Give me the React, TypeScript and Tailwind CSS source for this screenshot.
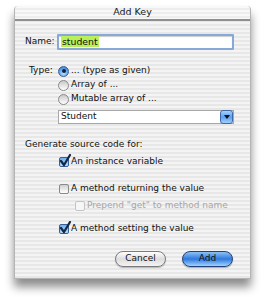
import React from 'react';

const font = "font-['DejaVu_Sans',sans-serif]";
const stripes =
  'bg-[repeating-linear-gradient(180deg,#f4f4f4_0px,#f4f4f4_2px,#e7e7e7_2px,#e7e7e7_4px)]';

function Radio({ on }: { on?: boolean }) {
  if (on) {
    return (
      <span className="relative flex h-[11px] w-[11px] items-center justify-center rounded-full border border-[#3a5f98] bg-[radial-gradient(circle_at_50%_70%,#bfe3ff_0%,#5ea2ea_55%,#2f6cc6_100%)]">
        <span className="h-[4px] w-[4px] rounded-full bg-[#10203a]" />
      </span>
    );
  }
  return (
    <span className="h-[11px] w-[11px] rounded-full border border-[#8a8a8a] bg-[linear-gradient(180deg,#c8c8c8,#ffffff)]" />
  );
}

function Check({ on, disabled }: { on?: boolean; disabled?: boolean }) {
  return (
    <span
      className={`relative h-[10px] w-[10px] rounded-[2px] border ${
        on
          ? 'border-[#3a5f98] bg-[linear-gradient(180deg,#6fb0f0,#b8dcff)]'
          : disabled
          ? 'border-[#c4c4c4] bg-[#f6f6f6]'
          : 'border-[#8a8a8a] bg-[linear-gradient(180deg,#d0d0d0,#ffffff)]'
      }`}
    >
      {on && (
        <svg className="absolute -left-[1px] -top-[4px]" width="13" height="13" viewBox="0 0 13 13">
          <path d="M2 7 L5 11 L11 1" fill="none" stroke="#142844" strokeWidth="2.2" strokeLinecap="round" strokeLinejoin="round" />
        </svg>
      )}
    </span>
  );
}

export default function App() {
  return (
    <div className={`h-[297px] w-[265px] bg-white pl-[14px] pt-[6px] text-[9px] text-[#111] ${font}`}>
      <div className={`flex h-[273px] w-[237px] flex-col rounded-t-[4px] border-x border-b border-[#b4b4b4] ${stripes} shadow-[0_8px_10px_rgba(0,0,0,0.45)]`}>
        <div className="flex h-[15px] items-center justify-center rounded-t-[4px] border-b-2 border-[#8e8e8e] bg-[repeating-linear-gradient(180deg,#f8f8f8_0px,#f8f8f8_2px,#ededed_2px,#ededed_4px)] text-[9.5px] text-[#202020]">
          Add Key
        </div>

        <div className="flex flex-col pl-[10px] pr-[16px]">
          <div className="mt-[12px] flex h-[17px] items-center">
            <span className="w-[32px]">Name:</span>
            <div className="flex h-[16px] flex-1 items-center rounded-[1px] border-2 border-[#86a9d8] bg-white pl-[2px] shadow-[inset_0_1px_1px_rgba(0,0,0,0.2)]">
              <span className="bg-[#b9f05a] px-[1px] text-[9.3px] leading-[11px]">student</span>
            </div>
          </div>

          <div className="mt-[14px] flex flex-col">
            {['... (type as given)', 'Array of ...', 'Mutable array of ...'].map((t, i) => (
              <div key={t} className="flex h-[14px] items-center">
                <span className="w-[33px] pl-[4px]">{i === 0 ? 'Type:' : ''}</span>
                <Radio on={i === 0} />
                <span className="ml-[2px]">{t}</span>
              </div>
            ))}
          </div>

          <div className="ml-[33px] mt-[4px] flex h-[14px] items-center border border-[#a8a8a8] bg-white pl-[2px]">
            <span className="flex-1">Student</span>
            <span className="flex h-[14px] w-[13px] items-center justify-center rounded-[3px] border border-[#3e6aa8] bg-[linear-gradient(180deg,#a6d2ff,#5b9ff0_50%,#9fd0ff)]">
              <svg width="6" height="4" viewBox="0 0 6 4">
                <path d="M0 0 H6 L3 4 Z" fill="#111" />
              </svg>
            </span>
          </div>

          <div className="mt-[14px] flex h-[14px] items-center">Generate source code for:</div>

          <div className="ml-[34px] mt-[3px] flex h-[14px] items-center gap-[2px]">
            <Check on />
            <span>An instance variable</span>
          </div>

          <div className="ml-[34px] mt-[13px] flex h-[14px] items-center gap-[2px]">
            <Check />
            <span>A method returning the value</span>
          </div>

          <div className="ml-[50px] mt-[3px] flex h-[14px] items-center gap-[2px] text-[#a6a6a6]">
            <Check disabled />
            <span>Prepend "get" to method name</span>
          </div>

          <div className="ml-[34px] mt-[9px] flex h-[14px] items-center gap-[2px]">
            <Check on />
            <span>A method setting the value</span>
          </div>

          <div className="mt-[15px] flex justify-end gap-[16px] pr-[1px]">
            <button className="flex h-[16px] w-[51px] items-center justify-center rounded-full border border-[#7a7a7a] bg-[linear-gradient(180deg,#ffffff,#dcdcdc_50%,#f4f4f4)] text-[9px] shadow-[0_1px_1px_rgba(0,0,0,0.25)]">
              Cancel
            </button>
            <button className="flex h-[16px] w-[51px] items-center justify-center rounded-full border border-[#24407a] bg-[linear-gradient(180deg,#8cc2f6,#2f78de_50%,#9fd4ff)] text-[9px] shadow-[0_1px_1px_rgba(0,0,0,0.3)]">
              Add
            </button>
          </div>
        </div>
      </div>
    </div>
  );
}
